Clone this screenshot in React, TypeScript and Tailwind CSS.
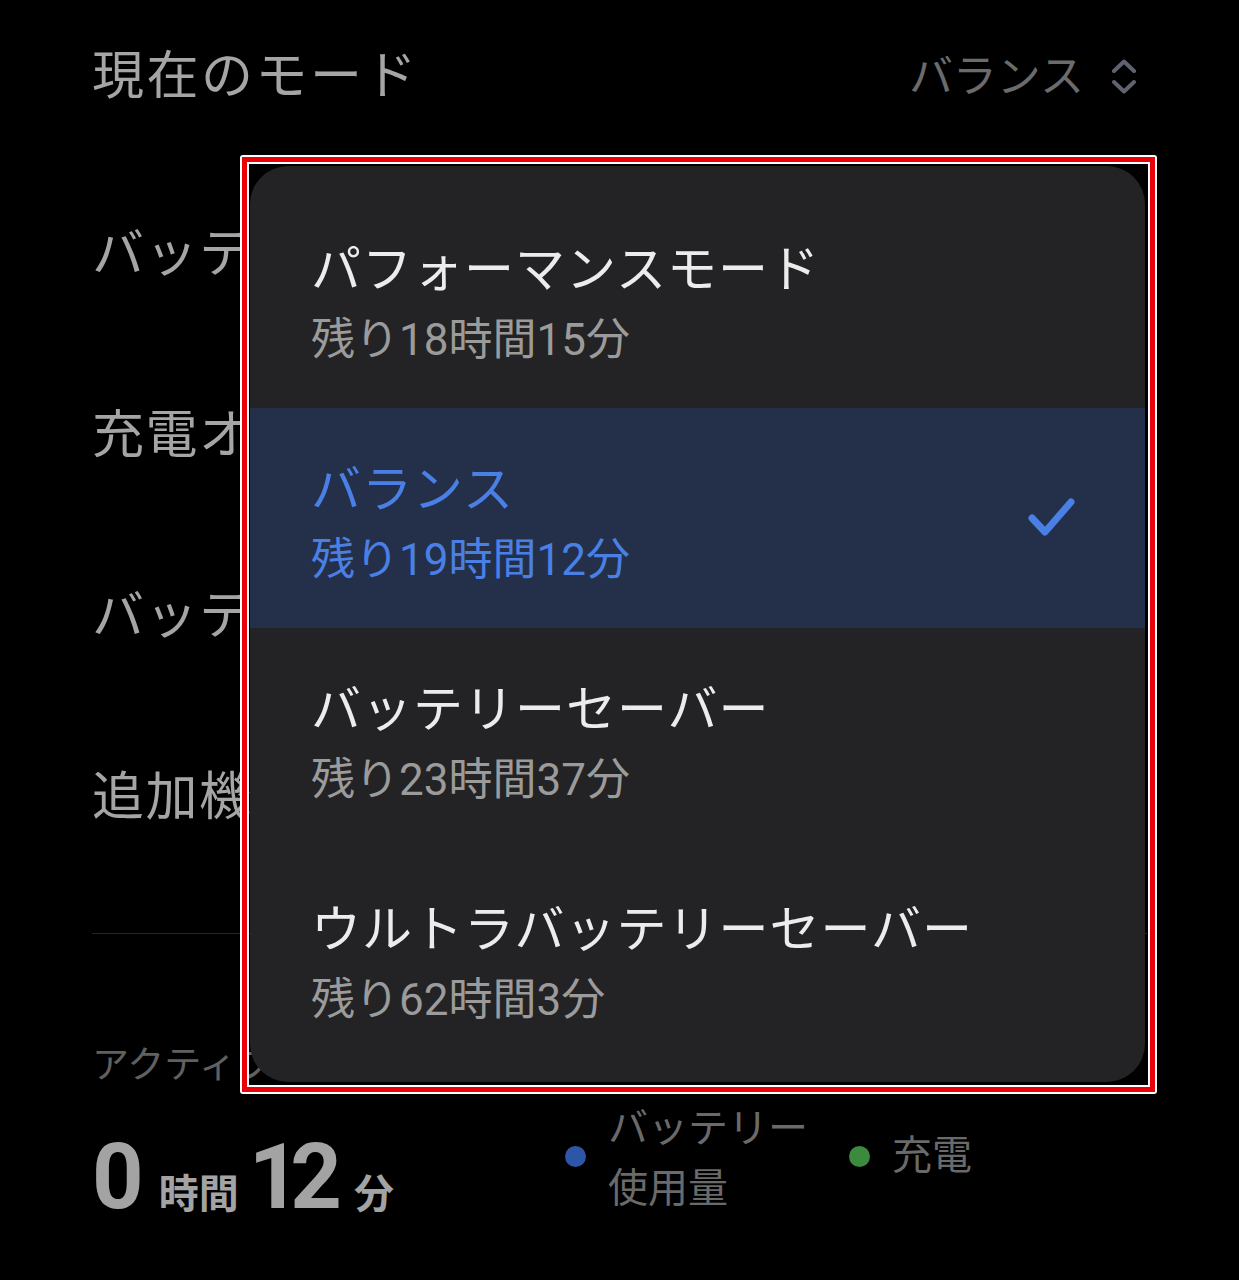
import React from 'react'

type Mode = { title: string; remain: string; selected?: boolean }

const modes: Mode[] = [
  { title: 'パフォーマンスモード', remain: '残り18時間15分' },
  { title: 'バランス', remain: '残り19時間12分', selected: true },
  { title: 'バッテリーセーバー', remain: '残り23時間37分' },
  { title: 'ウルトラバッテリーセーバー', remain: '残り62時間3分' },
]

const settings = ['バッテリー保護', '充電オプション', 'バッテリー情報', '追加機能']

function UpDownIcon() {
  return (
    <svg width="26" height="36" viewBox="0 0 26 36" fill="none" className="text-[#5f6370]">
      <path d="M3 12 L13 2.5 L23 12" stroke="currentColor" strokeWidth="4" strokeLinecap="round" strokeLinejoin="round" />
      <path d="M3 23 L13 32.5 L23 23" stroke="currentColor" strokeWidth="4" strokeLinecap="round" strokeLinejoin="round" />
    </svg>
  )
}

function CheckIcon() {
  return (
    <svg width="48" height="42" viewBox="0 0 48 42" fill="none" className="text-[#4a80e6]">
      <path d="M4 21 L17 35 L43 5" stroke="currentColor" strokeWidth="7" strokeLinecap="round" strokeLinejoin="round" />
    </svg>
  )
}

function ModeRow({ mode }: { mode: Mode }) {
  return (
    <div
      className={
        mode.selected
          ? 'flex h-[220px] items-center justify-between bg-[#243049] pl-[61px] pr-[69px]'
          : 'flex h-[220px] items-center justify-between pl-[61px] pr-[69px]'
      }
    >
      <div className="flex flex-col pt-[14px]">
        <span
          className={
            mode.selected
              ? 'text-[50px] leading-[70px] tracking-[1px] text-[#4a80e6]'
              : 'text-[50px] leading-[70px] tracking-[1px] text-[#ececec]'
          }
        >
          {mode.title}
        </span>
        <span
          className={
            mode.selected
              ? 'text-[44px] leading-[70px] text-[#4a80e6]'
              : 'text-[44px] leading-[70px] text-[#9b9b9b]'
          }
        >
          {mode.remain}
        </span>
      </div>
      {mode.selected && <CheckIcon />}
    </div>
  )
}

export default function App() {
  return (
    <div className="relative h-[1280px] w-[1239px] overflow-hidden bg-black font-['Roboto','Noto_Sans_CJK_JP',sans-serif]">
      <div className="px-[92px]">
        <div className="flex h-[164px] items-center justify-between pb-[10px]">
          <span className="text-[52px] tracking-[2.5px] text-[#a5a5a5]">現在のモード</span>
          <div className="flex items-center gap-[27px] pr-[10px]">
            <span className="text-[44px] text-[#6b6b6b]">バランス</span>
            <UpDownIcon />
          </div>
        </div>
        {settings.map((s) => (
          <div key={s} className="flex h-[181px] items-center">
            <span className="text-[52px] tracking-[1.5px] text-[#a5a5a5]">{s}</span>
          </div>
        ))}
        <div className="mt-[45px] h-px bg-[#262626]" />
        <div className="mt-[110px] text-[37px] leading-[43px] text-[#606060]">アクティブ時間</div>
        <div className="mt-[9px] flex h-[120px] items-center">
          <div className="flex w-[473px] items-baseline pt-[46px] text-[#a3a3a3]">
            <span className="text-[90px] font-bold leading-none tracking-[-3px]">0</span>
            <span className="ml-[18px] text-[40px] font-bold">時間</span>
            <span className="ml-[10px] text-[90px] font-bold leading-none tracking-[-10px]">12</span>
            <span className="ml-[22px] text-[40px] font-bold">分</span>
          </div>
          <div className="h-[21px] w-[21px] rounded-full bg-[#2d55a8]" />
          <div className="ml-[22px] flex w-[220px] flex-col pt-[6px] text-[40px] leading-[60px] text-[#6a6a6a]">
            <span>バッテリー</span>
            <span>使用量</span>
          </div>
          <div className="ml-[21px] h-[21px] w-[21px] rounded-full bg-[#3c8a3e]" />
          <span className="ml-[22px] text-[40px] leading-[60px] text-[#6a6a6a]">充電</span>
        </div>
      </div>

      {/* popup menu */}
      <div className="absolute left-[250px] top-[166px] h-[916px] w-[895px] overflow-hidden rounded-[38px] bg-[#232325] pt-[22px]">
        {modes.map((m) => (
          <ModeRow key={m.title} mode={m} />
        ))}
      </div>

      {/* annotation frame */}
      <div className="absolute left-[240px] top-[155px] h-[939px] w-[917px] rounded-[3px] border-2 border-white">
        <div className="h-full w-full border-[5px] border-[#e8000b]">
          <div className="h-full w-full border-2 border-white" />
        </div>
      </div>
    </div>
  )
}
